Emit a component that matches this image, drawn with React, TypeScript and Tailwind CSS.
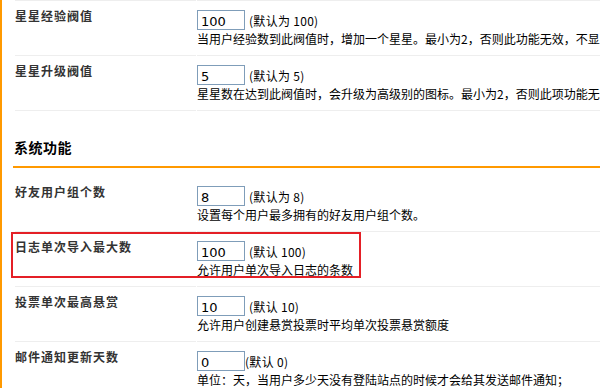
import * as React from 'react';

interface SettingRow {
    label: string;
    value: string;
    hint: string;
    desc: string;
    tight?: boolean;
    marked?: boolean;
}

const starRows: SettingRow[] = [
    { label: '星星经验阀值', value: '100', hint: '(默认为 100)', desc: '当用户经验数到此阀值时，增加一个星星。最小为2，否则此功能无效，不显示' },
    { label: '星星升级阀值', value: '5', hint: '(默认为 5)', desc: '星星数在达到此阀值时，会升级为高级别的图标。最小为2，否则此项功能无效，不显示' },
];

const systemRows: SettingRow[] = [
    { label: '好友用户组个数', value: '8', hint: '(默认为 8)', desc: '设置每个用户最多拥有的好友用户组个数。' },
    { label: '日志单次导入最大数', value: '100', hint: '(默认 100)', desc: '允许用户单次导入日志的条数', marked: true },
    { label: '投票单次最高悬赏', value: '10', hint: '(默认 10)', desc: '允许用户创建悬赏投票时平均单次投票悬赏额度' },
    { label: '邮件通知更新天数', value: '0', hint: '(默认 0)', desc: '单位：天，当用户多少天没有登陆站点的时候才会给其发送邮件通知；', tight: true },
];

function Row({ row }: { row: SettingRow }) {
    const [val, setVal] = React.useState(row.value);

    return (
        <div className="relative flex pl-[2px]">
            <div className="w-[181px] shrink-0 h-[55px] border-b border-[#eeeeee] pt-[5px] text-[12px] leading-[20px] font-bold tracking-[1px] text-[#333333]">
                {row.label}
            </div>
            <div className="ml-[1px] flex-1 min-w-0 h-[55px] border-b border-[#eeeeee] pt-[9px] overflow-hidden whitespace-nowrap">
                <div className="flex items-center h-[20px]">
                    <input
                        value={val}
                        onChange={e => setVal(e.target.value)}
                        className="w-[48px] h-[20px] border border-[#7f9db9] px-[3px] pt-[3px] pb-0 text-[13px] leading-[15px] font-['DejaVu_Sans',sans-serif] text-black outline-none"
                    />
                    <span className={`${row.tight ? '' : 'ml-[4px]'} pt-[2px] text-[12px] tracking-[0.3px] text-black`}>{row.hint}</span>
                </div>
                <div className="h-[18px] leading-[18px] text-[12px] text-black">{row.desc}</div>
            </div>
            {row.marked && (
                <div className="absolute left-[-2px] top-0 w-[350px] h-[46px] border-2 border-[#e41f26] pointer-events-none" />
            )}
        </div>
    );
}

export default function App() {
    return (
        <div className="w-[600px] h-[388px] overflow-hidden bg-white border-l-2 border-[#ff9900] font-['Noto_Sans_CJK_SC',sans-serif]">
            <div className="pl-[11px]">
                {/* tail of the row above, only its bottom line is visible */}
                <div className="flex pl-[2px]">
                    <div className="w-[181px] h-px bg-[#eeeeee]" />
                    <div className="ml-[1px] flex-1 h-px bg-[#eeeeee]" />
                </div>

                {starRows.map(r => <Row key={r.label} row={r} />)}

                <div className="pt-[26px] pl-[1px] h-[55px]">
                    <h2 className="text-[14px] leading-[20px] font-bold text-black tracking-[0.5px]">系统功能</h2>
                </div>
                <div className="h-[2px] bg-[#ff9900] mb-[9px]" />

                {systemRows.map(r => <Row key={r.label} row={r} />)}
            </div>
        </div>
    );
}
